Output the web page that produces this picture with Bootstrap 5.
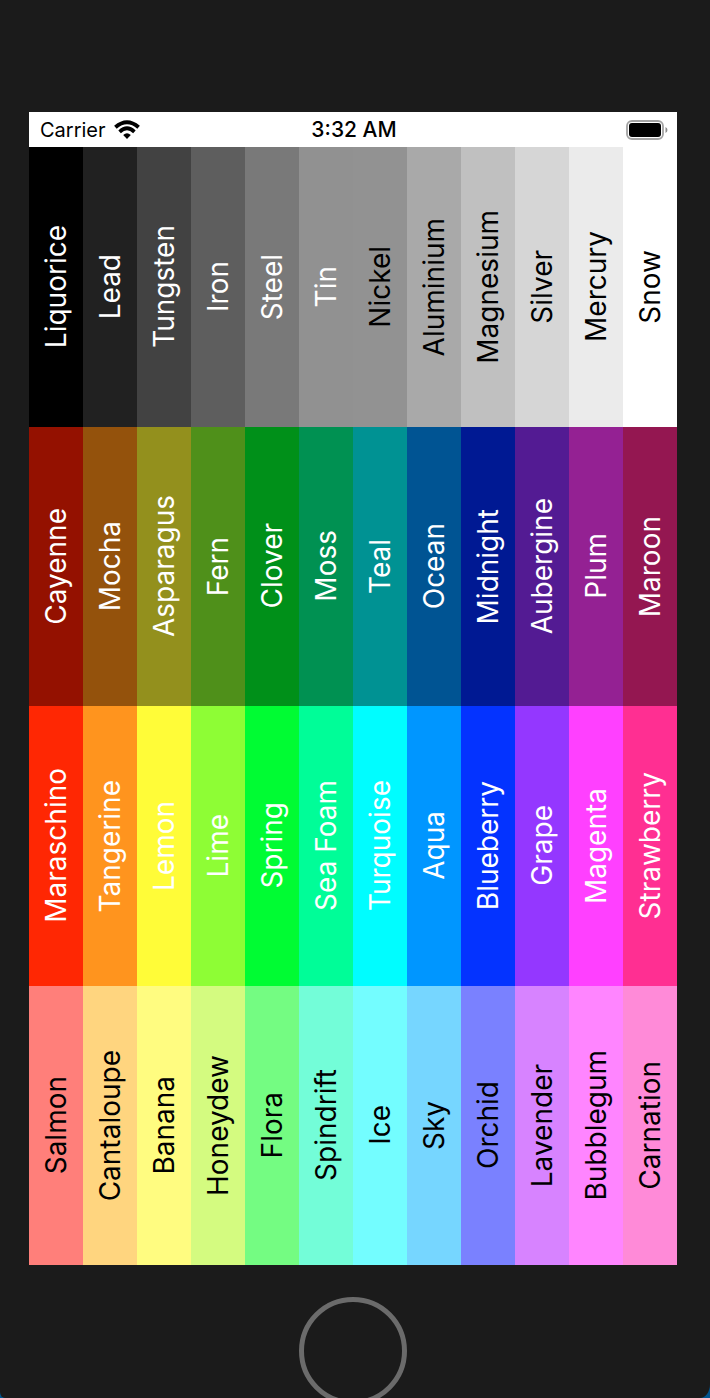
<!DOCTYPE html>
<html lang="en">
<head>
<meta charset="utf-8">
<meta name="viewport" content="width=device-width, initial-scale=1">
<title>Crayons</title>
<link href="https://cdn.jsdelivr.net/npm/bootstrap@5.3.0/dist/css/bootstrap.min.css" rel="stylesheet">
<style>
  body { background: #00558f; font-family: Inter, "Liberation Sans", sans-serif; }
  .device { background: #1b1b1b; padding: 112px 33px 0 29px; border-radius: 0 0 10px 5px / 0 0 14px 6px; }
  .status-bar { height: 35px; padding: 0 9px; font-size: 20px; line-height: 24px; }
  .status-side { flex: 1 1 0; }
  .carrier { padding-left: 2px; }
  .clock { font-size: 21px; font-weight: 500; }
  .palette { grid-template-rows: repeat(4, 1fr); }
  .crayon { font-size: 28px; line-height: 36px; }
  .crayon span { writing-mode: vertical-rl; transform: rotate(180deg); white-space: nowrap; }
  .home-area { height: 133px; padding-top: 32px; }
  .home-button { width: 108px; height: 108px; border: 5px solid #6b6b6b; background: transparent; }
</style>
</head>
<body>
<div class="device d-flex flex-column vh-100 overflow-hidden">
  <main class="d-flex flex-column flex-grow-1 bg-white">
    <header class="status-bar d-flex align-items-center text-black flex-shrink-0">
      <div class="status-side carrier d-flex align-items-center gap-2">
        <span>Carrier</span>
        <svg width="26" height="20" viewBox="0 0 26 20" aria-label="Wi-Fi" role="img">
          <path d="M1.4 7.2Q13-2.8 24.6 7.2" fill="none" stroke="#000" stroke-width="3.9"/>
          <path d="M5.6 11.8Q13 4.8 20.4 11.8" fill="none" stroke="#000" stroke-width="3.7"/>
          <path d="M9.2 15Q13 11.6 16.8 15L13 19Z"/>
        </svg>
      </div>
      <div class="clock">3:32 AM</div>
      <div class="status-side d-flex justify-content-end">
        <svg width="42" height="20" viewBox="0 0 42 20" aria-label="Battery full" role="img">
          <rect x="1" y="1" width="36" height="18" rx="5" fill="none" stroke="#a3a3a3" stroke-width="1.8"/>
          <rect x="3" y="3" width="32" height="14" rx="3"/>
          <path d="M39.5 7Q41.5 8 41.5 10T39.5 13Z" fill="#8c8c8c"/>
        </svg>
      </div>
    </header>
    <div id="palette" class="palette d-grid flex-grow-1"></div>
  </main>
  <div class="home-area d-flex justify-content-center align-items-start flex-shrink-0 overflow-hidden">
    <button type="button" class="home-button rounded-circle flex-shrink-0" aria-label="Home"></button>
  </div>
</div>
<script src="https://cdn.jsdelivr.net/npm/bootstrap@5.3.0/dist/js/bootstrap.bundle.min.js"></script>
<script>
  const rows = [
    [["Liquorice","#000000"],["Lead","#212121"],["Tungsten","#424242"],["Iron","#5e5e5e"],["Steel","#797979"],["Tin","#919191"],
     ["Nickel","#929292",1],["Aluminium","#a9a9a9",1],["Magnesium","#c0c0c0",1],["Silver","#d6d6d6",1],["Mercury","#ebebeb",1],["Snow","#ffffff",1]],
    [["Cayenne","#941100"],["Mocha","#94520c"],["Asparagus","#93901d"],["Fern","#4f901a"],["Clover","#009019"],["Moss","#009152"],
     ["Teal","#009293"],["Ocean","#005493"],["Midnight","#001993"],["Aubergine","#531b93"],["Plum","#942193"],["Maroon","#941751"]],
    [["Maraschino","#ff2703"],["Tangerine","#ff941e"],["Lemon","#fffc38"],["Lime","#8efd35"],["Spring","#00fc33"],["Sea Foam","#00fd98"],
     ["Turquoise","#00fdff"],["Aqua","#0096ff"],["Blueberry","#0433ff"],["Grape","#9437ff"],["Magenta","#ff40ff"],["Strawberry","#ff2f92"]],
    [["Salmon","#ff7f7a",1],["Cantaloupe","#ffd57f",1],["Banana","#fffc80",1],["Honeydew","#d4fb80",1],["Flora","#74fc82",1],["Spindrift","#73fdd8",1],
     ["Ice","#73fdff",1],["Sky","#76d6ff",1],["Orchid","#7a81ff",1],["Lavender","#d783ff",1],["Bubblegum","#ff85ff",1],["Carnation","#ff8ad8",1]]
  ];
  document.getElementById("palette").innerHTML = rows.map(row =>
    '<div class="row g-0">' + row.map(([name, colour, dark]) =>
      `<div class="crayon col d-flex align-items-center justify-content-center ${dark ? "text-black" : "text-white"}" style="background-color:${colour}"><span>${name}</span></div>`
    ).join("") + "</div>").join("");
</script>
</body>
</html>
